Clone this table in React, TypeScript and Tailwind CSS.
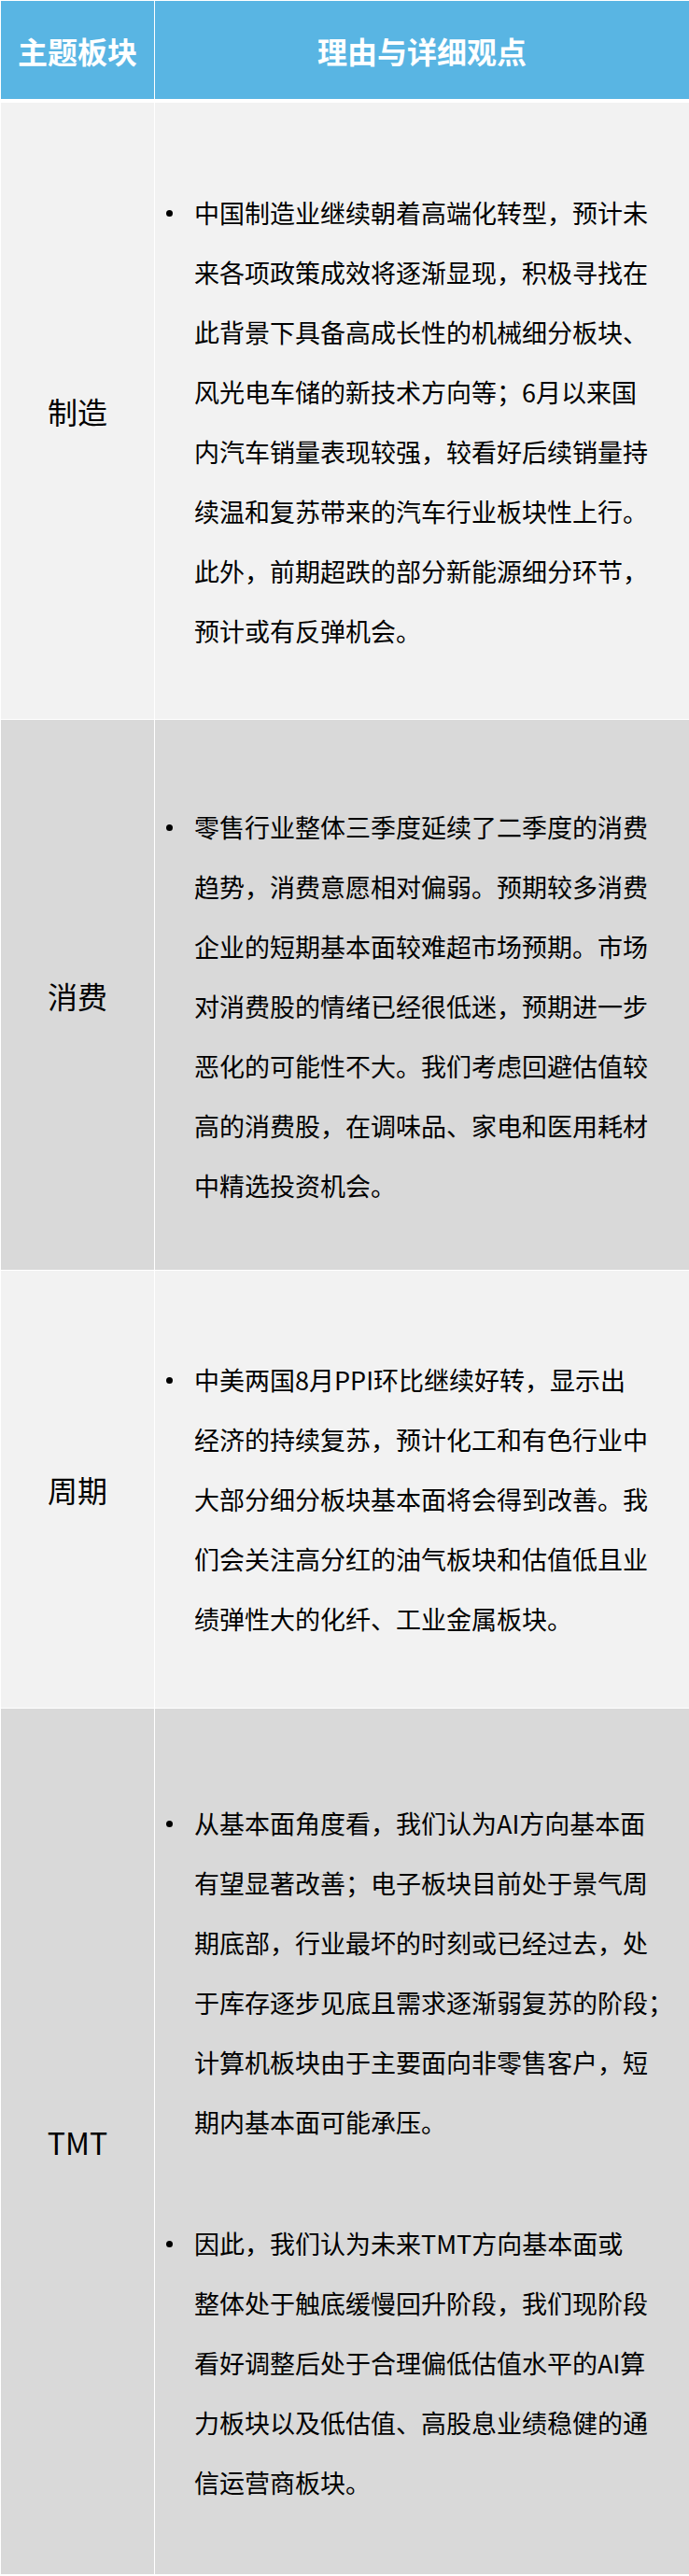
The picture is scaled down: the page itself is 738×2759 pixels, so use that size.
import React from 'react';

interface Row {
  label: string;
  bullets: string[][];
  bg: string;
  pad: string;
}

const rows: Row[] = [
  {
    label: '制造',
    bg: 'bg-[#f2f2f2]',
    pad: 'pt-[86px] pb-[62px]',
    bullets: [
      [
        '中国制造业继续朝着高端化转型，预计未',
        '来各项政策成效将逐渐显现，积极寻找在',
        '此背景下具备高成长性的机械细分板块、',
        '风光电车储的新技术方向等；6月以来国',
        '内汽车销量表现较强，较看好后续销量持',
        '续温和复苏带来的汽车行业板块性上行。',
        '此外，前期超跌的部分新能源细分环节，',
        '预计或有反弹机会。',
      ],
    ],
  },
  {
    label: '消费',
    bg: 'bg-[#d9d9d9]',
    pad: 'pt-[83px] pb-[58px]',
    bullets: [
      [
        '零售行业整体三季度延续了二季度的消费',
        '趋势，消费意愿相对偏弱。预期较多消费',
        '企业的短期基本面较难超市场预期。市场',
        '对消费股的情绪已经很低迷，预期进一步',
        '恶化的可能性不大。我们考虑回避估值较',
        '高的消费股，在调味品、家电和医用耗材',
        '中精选投资机会。',
      ],
    ],
  },
  {
    label: '周期',
    bg: 'bg-[#f2f2f2]',
    pad: 'pt-[85px] pb-[63px]',
    bullets: [
      [
        '中美两国8月PPI环比继续好转，显示出',
        '经济的持续复苏，预计化工和有色行业中',
        '大部分细分板块基本面将会得到改善。我',
        '们会关注高分红的油气板块和估值低且业',
        '绩弹性大的化纤、工业金属板块。',
      ],
    ],
  },
  {
    label: 'TMT',
    bg: 'bg-[#d9d9d9]',
    pad: 'pt-[91px] pb-[66px]',
    bullets: [
      [
        '从基本面角度看，我们认为AI方向基本面',
        '有望显著改善；电子板块目前处于景气周',
        '期底部，行业最坏的时刻或已经过去，处',
        '于库存逐步见底且需求逐渐弱复苏的阶段；',
        '计算机板块由于主要面向非零售客户，短',
        '期内基本面可能承压。',
      ],
      [
        '因此，我们认为未来TMT方向基本面或',
        '整体处于触底缓慢回升阶段，我们现阶段',
        '看好调整后处于合理偏低估值水平的AI算',
        '力板块以及低估值、高股息业绩稳健的通',
        '信运营商板块。',
      ],
    ],
  },
];

const font = 'font-["Noto_Sans_CJK_SC","Noto_Sans",sans-serif]';

const Bullet: React.FC<{ lines: string[] }> = ({ lines }) => (
  <div className="flex">
    <div className="w-[42px] shrink-0">
      <div className="ml-[12px] mt-[29px] w-[7px] h-[7px] rounded-full bg-black" />
    </div>
    <div className="flex flex-col">
      {lines.map((l, i) => (
        <div key={i} className="whitespace-nowrap leading-[64px] h-[64px]">
          {l}
        </div>
      ))}
    </div>
  </div>
);

export default function App() {
  return (
    <div className={`w-[738px] bg-white pl-px pt-px pb-[2px] ${font}`}>
      {/* 表头 */}
      <div className="grid grid-cols-[164px_1fr] gap-px h-[105px] text-white font-bold text-[32px]">
        <div className="bg-[#59b5e3] flex items-center justify-center">主题板块</div>
        <div className="bg-[#59b5e3] flex items-center justify-center">理由与详细观点</div>
      </div>
      <div className="flex flex-col gap-px mt-[4px]">
        {rows.map((r) => (
          <div key={r.label} className="grid grid-cols-[164px_1fr] gap-px text-black">
            <div className={`${r.bg} flex items-center justify-center text-[32px]`}>{r.label}</div>
            <div className={`${r.bg} ${r.pad} text-[27px] flex flex-col gap-[66px]`}>
              {r.bullets.map((b, i) => (
                <Bullet key={i} lines={b} />
              ))}
            </div>
          </div>
        ))}
      </div>
    </div>
  );
}
